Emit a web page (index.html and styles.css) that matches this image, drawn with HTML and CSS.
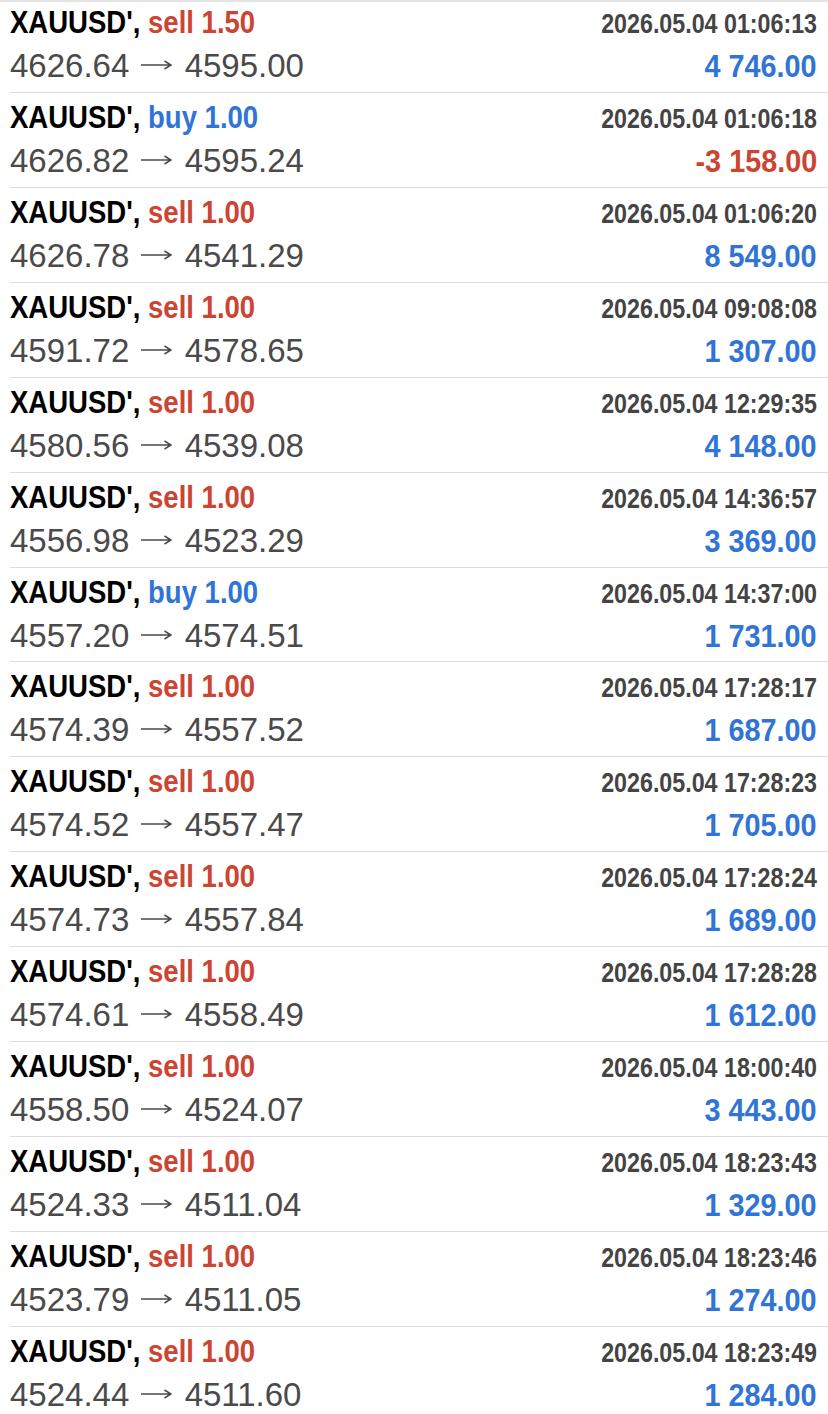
FILE: index.html
```html
<!DOCTYPE html>
<html lang="en">
<head>
    <meta charset="UTF-8">
    <meta name="viewport" content="width=device-width, initial-scale=1.0">
    <title>History</title>
    <link rel="stylesheet" href="styles.css">
</head>
<body>
    <div class="deals" id="deals"></div>

    <script>
        const deals = [
            ['sell', '1.50', '2026.05.04 01:06:13', '4626.64', '4595.00', '4 746.00'],
            ['buy', '1.00', '2026.05.04 01:06:18', '4626.82', '4595.24', '-3 158.00'],
            ['sell', '1.00', '2026.05.04 01:06:20', '4626.78', '4541.29', '8 549.00'],
            ['sell', '1.00', '2026.05.04 09:08:08', '4591.72', '4578.65', '1 307.00'],
            ['sell', '1.00', '2026.05.04 12:29:35', '4580.56', '4539.08', '4 148.00'],
            ['sell', '1.00', '2026.05.04 14:36:57', '4556.98', '4523.29', '3 369.00'],
            ['buy', '1.00', '2026.05.04 14:37:00', '4557.20', '4574.51', '1 731.00'],
            ['sell', '1.00', '2026.05.04 17:28:17', '4574.39', '4557.52', '1 687.00'],
            ['sell', '1.00', '2026.05.04 17:28:23', '4574.52', '4557.47', '1 705.00'],
            ['sell', '1.00', '2026.05.04 17:28:24', '4574.73', '4557.84', '1 689.00'],
            ['sell', '1.00', '2026.05.04 17:28:28', '4574.61', '4558.49', '1 612.00'],
            ['sell', '1.00', '2026.05.04 18:00:40', '4558.50', '4524.07', '3 443.00'],
            ['sell', '1.00', '2026.05.04 18:23:43', '4524.33', '4511.04', '1 329.00'],
            ['sell', '1.00', '2026.05.04 18:23:46', '4523.79', '4511.05', '1 274.00'],
            ['sell', '1.00', '2026.05.04 18:23:49', '4524.44', '4511.60', '1 284.00']
        ];

        const list = document.getElementById('deals');

        const arrow = `<svg class="arrow" width="31" height="10" viewBox="0 0 31 10">
            <path d="M0 5H30M23.5 1L30 5L23.5 9" fill="none" stroke="currentColor" stroke-width="1.5"/>
        </svg>`;

        deals.forEach(([type, volume, time, open, close, profit]) => {
            const row = document.createElement('div');
            row.className = 'deal';
            const profitClass = profit.startsWith('-') ? 'loss' : 'gain';
            row.innerHTML = `
                <div class="deal-top">
                    <span class="symbol">XAUUSD', <span class="${type}">${type} ${volume}</span></span>
                    <span class="time">${time}</span>
                </div>
                <div class="deal-bottom">
                    <span class="prices">${open} ${arrow} ${close}</span>
                    <span class="profit ${profitClass}">${profit}</span>
                </div>
            `;
            list.appendChild(row);
        });
    </script>
</body>
</html>
```

FILE: styles.css
```css
body {
    margin: 0;
    padding: 0;
    background-color: #fff;
    font-family: 'Liberation Sans', Arial, sans-serif;
    border-top: 2px solid #e4e4e4;
    overflow: hidden;
}

.deals {
    margin-top: -4px;
}

.deal {
    box-sizing: border-box;
    height: 94.93px;
    margin-left: 10px;
    padding: 3px 11px 0 0;
    border-bottom: 1px solid #dcdcdc;
}

.deal-top,
.deal-bottom {
    display: flex;
    justify-content: space-between;
    align-items: baseline;
    white-space: nowrap;
}

.deal-top {
    height: 42px;
    line-height: 42px;
}

.deal-bottom {
    height: 46px;
    line-height: 46px;
}

/* the app uses a condensed bold face, squeeze the regular one */
.symbol,
.time,
.profit {
    display: inline-block;
    font-weight: bold;
}

.symbol {
    font-size: 32px;
    color: #000;
    transform: scaleX(0.86);
    transform-origin: left center;
}

.sell {
    color: #cc4432;
}

.buy {
    color: #2f74d6;
}

.time {
    font-size: 28px;
    color: #444;
    transform: scaleX(0.83);
    transform-origin: right center;
}

.prices {
    font-size: 33px;
    color: #4a4a4a;
}

.arrow {
    margin: 0 3px;
    vertical-align: 7px;
}

.profit {
    font-size: 32px;
    transform: scaleX(0.9);
    transform-origin: right center;
}

.gain {
    color: #2f74d6;
}

.loss {
    color: #cc4432;
}
```
